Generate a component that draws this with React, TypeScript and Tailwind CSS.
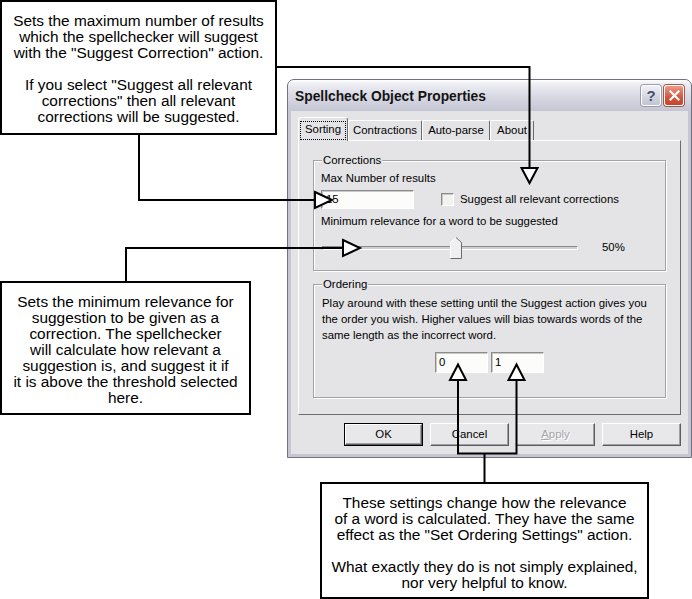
import React from "react";

const BODY = "bg-[#e4e4e7]";

function Sunken({ className = "", children }: { className?: string; children?: React.ReactNode }) {
  return (
    <div
      className={
        "border border-t-[#8c8c8c] border-l-[#8c8c8c] border-b-white border-r-white bg-[#fcfcfa] shadow-[inset_1px_1px_0_#c8c8c8] " +
        className
      }
    >
      {children}
    </div>
  );
}

function Group({ title, className = "", children }: { title: string; className?: string; children?: React.ReactNode }) {
  return (
    <div
      className={
        "relative border border-[#a2a2a8] shadow-[inset_1px_1px_0_#ffffff,1px_1px_0_#ffffff] " + className
      }
    >
      <span className={"absolute left-[8px] top-[-7px] px-[1px] leading-[13px] " + BODY}>{title}</span>
      {children}
    </div>
  );
}

function Btn({ children, def = false }: { children: React.ReactNode; def?: boolean }) {
  const inner = (
    <div className="flex h-full w-full items-center justify-center border border-t-white border-l-white border-b-[#5c5c5c] border-r-[#5c5c5c] bg-[#e8e8eb] shadow-[inset_-1px_-1px_0_#a0a0a4]">
      {children}
    </div>
  );
  return def ? (
    <div className="h-[23px] w-[79px] border border-black">{inner}</div>
  ) : (
    <div className="h-[23px] w-[79px]">{inner}</div>
  );
}

function Tab({ label, w, selected = false }: { label: string; w: string; selected?: boolean }) {
  if (selected) {
    return (
      <div
        className={
          "relative z-10 -mb-[1px] flex h-[24px] items-center justify-center rounded-t-[3px] border-l border-t border-r border-l-white border-t-white border-r-[#6a6a6a] px-[1px] pt-[1px] " +
          BODY +
          " " +
          w
        }
      >
        <div className="flex h-[19px] w-full items-center justify-center border border-dotted border-black">
          {label}
        </div>
      </div>
    );
  }
  return (
    <div
      className={
        "flex h-[20px] items-center justify-center rounded-t-[2px] border-l border-t border-r border-l-white border-t-white border-r-[#6a6a6a] " +
        BODY +
        " " +
        w
      }
    >
      {label}
    </div>
  );
}

function Callout({ className, children }: { className: string; children: React.ReactNode }) {
  return (
    <div
      className={
        "absolute border-2 border-black bg-white pt-[11px] text-center text-[15.4px] leading-[16px] text-black whitespace-nowrap font-['Liberation_Sans',Arial,sans-serif] " +
        className
      }
    >
      {children}
    </div>
  );
}

export default function App() {
  return (
    <div className="relative h-[599px] w-[692px] overflow-hidden bg-white">
      {/* Dialog window */}
      <div className="absolute left-[287px] top-[79px] flex w-[405px] flex-col rounded-t-[7px] border border-[#70707f] bg-[#c6c6d3] text-[11.4px] text-black font-['Liberation_Sans',Arial,sans-serif]">
        <div className="flex h-[31px] items-center rounded-t-[6px] bg-[linear-gradient(to_bottom,#ffffff_0%,#eeeef4_12%,#dcdce6_45%,#c5c6d4_100%)] pl-[7px] pr-[7px]">
          <span className="flex-1 pt-[3px] text-[13.8px] font-bold text-[#141414]">Spellcheck Object Properties</span>
          <div className="flex gap-[3px] pb-[1px]">
            <div className="flex h-[21px] w-[20px] items-center justify-center rounded-[3px] border border-white bg-[linear-gradient(to_bottom,#eef0f6,#bfc3d3)] shadow-[0_0_0_1px_#9a9cae]">
              <span className="text-[15px] font-bold leading-none text-[#4a4f63]">?</span>
            </div>
            <div className="flex h-[21px] w-[20px] items-center justify-center rounded-[3px] border border-white bg-[linear-gradient(to_bottom,#ee9a86,#d2543c_60%,#c9452e)] shadow-[0_0_0_1px_#a3564a]">
              <svg width="11" height="11" viewBox="0 0 11 11">
                <path d="M1.5 1.5 L9.5 9.5 M9.5 1.5 L1.5 9.5" stroke="#ffffff" strokeWidth="2.2" strokeLinecap="square" />
              </svg>
            </div>
          </div>
        </div>

        <div className={"mx-[3px] mb-[3px] flex flex-col px-[7px] pt-[6px] pb-[8px] " + BODY}>
          {/* Tabs */}
          <div className="flex h-[23px] items-end">
            <Tab label="Sorting" w="w-[50px]" selected />
            <Tab label="Contractions" w="w-[74px]" />
            <Tab label="Auto-parse" w="w-[68px]" />
            <Tab label="About" w="w-[44px]" />
          </div>

          {/* Panel */}
          <div
            className={
              "flex h-[275px] flex-col border border-t-white border-l-white border-r-[#6c6c6c] border-b-[#6c6c6c] px-[14px] pt-[19px] " +
              BODY
            }
          >
            <Group title="Corrections" className="h-[111px] pl-[7px] pt-[11px]">
              <div className="leading-[13px]">Max Number of results</div>
              <div className="mt-[5px] flex items-center">
                <Sunken className="flex h-[19px] w-[93px] items-center pl-[4px]">15</Sunken>
                <Sunken className="ml-[27px] h-[13px] w-[13px] !bg-[#f2f2ee]" />
                <span className="ml-[6px] leading-[13px]">Suggest all relevant corrections</span>
              </div>
              <div className="mt-[6px] leading-[13px]">Minimum relevance for a word to be suggested</div>
              <div className="relative mt-[9px] flex h-[22px] items-center">
                <div className="ml-[1px] h-[4px] w-[256px] border border-t-[#8a8a8a] border-l-[#8a8a8a] border-b-white border-r-white bg-[#cfcfd3]" />
                <span className="ml-[24px]">50%</span>
                <svg className="absolute left-[129px] top-0" width="12" height="22" viewBox="0 0 12 22">
                  <path d="M0.5 21.5 V5.5 L6 0.5 L11.5 5.5 V21.5 Z" fill="#efeff1" />
                  <polyline points="0.5,21 0.5,5.5 6,0.5" fill="none" stroke="#ffffff" strokeWidth="1" />
                  <polyline points="6,0.5 11.5,5.5 11.5,21.5 0.5,21.5" fill="none" stroke="#6a6a6a" strokeWidth="1" />
                </svg>
              </div>
            </Group>

            <Group title="Ordering" className="mt-[13px] h-[114px] pl-[8px] pt-[10px]">
              <p className="whitespace-nowrap leading-[16px]">
                Play around with these setting until the Suggest action gives you
                <br />
                the order you wish. Higher values will bias towards words of the
                <br />
                same length as the incorrect word.
              </p>
              <div className="mt-[9px] flex justify-center gap-[3px] pr-[8px]">
                <Sunken className="flex h-[21px] w-[53px] items-center pl-[3px]">0</Sunken>
                <Sunken className="flex h-[21px] w-[53px] items-center pl-[3px]">1</Sunken>
              </div>
            </Group>
          </div>

          {/* Buttons */}
          <div className="mt-[8px] flex justify-end gap-[7px]">
            <Btn def>OK</Btn>
            <Btn>Cancel</Btn>
            <Btn>
              <span className="text-[#a6a6aa] [text-shadow:1px_1px_0_#ffffff]">
                <span className="underline">A</span>pply
              </span>
            </Btn>
            <Btn>Help</Btn>
          </div>
        </div>
      </div>

      {/* Callouts */}
      <Callout className="left-0 top-0 h-[135px] w-[277px]">
        <p>
          Sets the maximum number of results
          <br />
          which the spellchecker will suggest
          <br />
          with the "Suggest Correction" action.
        </p>
        <p className="mt-[16px]">
          If you select "Suggest all relevant
          <br />
          corrections" then all relevant
          <br />
          corrections will be suggested.
        </p>
      </Callout>

      <Callout className="left-0 top-[281px] h-[134px] w-[251px]">
        <p>
          Sets the minimum relevance for
          <br />
          suggestion to be given as a
          <br />
          correction. The spellchecker
          <br />
          will calculate how relevant a
          <br />
          suggestion is, and suggest it if
          <br />
          it is above the threshold selected
          <br />
          here.
        </p>
      </Callout>

      <Callout className="left-[320px] top-[482px] h-[117px] w-[329px]">
        <p>
          These settings change how the relevance
          <br />
          of a word is calculated. They have the same
          <br />
          effect as the "Set Ordering Settings" action.
        </p>
        <p className="mt-[16px]">
          What exactly they do is not simply explained,
          <br />
          nor very helpful to know.
        </p>
      </Callout>

      {/* Connectors */}
      <svg className="pointer-events-none absolute left-0 top-0" width="692" height="599" viewBox="0 0 692 599">
        <g fill="none" stroke="#000" strokeWidth="2">
          <polyline points="139,134 139,200 315,200" />
          <polyline points="276,67 529.5,67 529.5,168" />
          <polyline points="126,281 126,248 343,248" />
          <polyline points="458,380 458,453.5 516.5,453.5 516.5,380" />
          <line x1="484.5" y1="453.5" x2="484.5" y2="482" />
        </g>
        <g fill="#fff" stroke="#000" strokeWidth="2">
          <polygon points="315,192 332,200 315,208" />
          <polygon points="521.5,168 537.5,168 529.5,183" />
          <polygon points="343,240 360,248 343,256" />
          <polygon points="450,380 466,380 458,364.5" />
          <polygon points="508.5,380 524.5,380 516.5,364.5" />
        </g>
      </svg>
    </div>
  );
}
